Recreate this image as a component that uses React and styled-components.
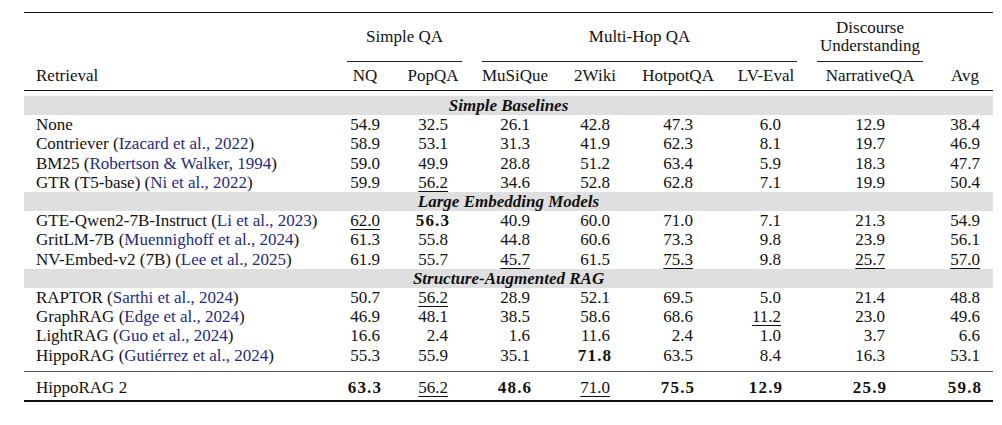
import React from 'react';
import styled, { createGlobalStyle } from 'styled-components';

const GlobalStyle = createGlobalStyle`
  html, body { margin: 0; padding: 0; background: #fff; }
  body, table, th, td { font-family: "Liberation Serif", "Times New Roman", serif; color: #111; }
`;

const Page = styled.div`
  padding: 12px 9px 20px 24px;
`;

const Table = styled.table`
  width: 969px;
  table-layout: fixed;
  border-collapse: collapse;
  border-top: 1.6px solid #111;
  border-bottom: 2px solid #111;
  font-family: "Liberation Serif", "Times New Roman", serif;
  font-size: 17px;
`;

const GroupCell = styled.th`
  padding: 0;
  font-weight: normal;
  font-size: 17px;
  vertical-align: bottom;
`;

const GroupLabel = styled.div`
  height: 48px;
  margin: 0 ${p => p.$mr || 0}px 0 ${p => p.$ml || 0}px;
  display: flex;
  align-items: center;
  justify-content: center;
  text-align: center;
  line-height: 18px;
  border-bottom: ${p => (p.$rule ? '1px solid #222' : 'none')};
`;

const HeadCell = styled.th`
  height: 28px;
  padding: 0;
  padding-left: ${p => (p.$left ? '12px' : '0')};
  font-weight: normal;
  font-size: 17px;
  text-align: ${p => (p.$left ? 'left' : 'center')};
  vertical-align: middle;
  border-bottom: 1px solid #111;
  white-space: nowrap;
`;

const Spacer = styled.td`
  height: ${p => p.$h}px;
  padding: 0;
`;

const BandCell = styled.td`
  height: 19.2px;
  padding: 0;
  line-height: 19.2px;
  font-size: 17px;
  background: #dfdfdf;
  text-align: center;
  font-weight: bold;
  font-style: italic;
`;

const Cell = styled.td`
  height: 19.2px;
  line-height: 19.2px;
  font-size: 17px;
  padding: ${p => (p.$final ? '6px 0 3px' : '0')};
  padding-left: ${p => (p.$left ? '12px' : '0')};
  text-align: ${p => (p.$left ? 'left' : 'center')};
  border-top: ${p => (p.$final ? '1px solid #555' : 'none')};
  white-space: nowrap;
`;

const Num = styled.span`
  display: inline-block;
  min-width: 30px;
  text-align: right;
  font-weight: ${p => (p.$bold ? 'bold' : 'normal')};
  letter-spacing: ${p => (p.$bold ? '1.2px' : '0')};
  text-decoration: ${p => (p.$under ? 'underline' : 'none')};
  text-decoration-thickness: 1px;
  text-underline-offset: 3px;
`;

const Cite = styled.span`
  color: #1e2a84;
`;

const widths = [307, 68, 68, 96, 64, 102, 74, 134, 56];
const columns = ['NQ', 'PopQA', 'MuSiQue', '2Wiki', 'HotpotQA', 'LV-Eval', 'NarrativeQA', 'Avg'];

const sections = [
  {
    title: 'Simple Baselines',
    rows: [
      ['None', null, '54.9 32.5 26.1 42.8 47.3 6.0 12.9 38.4'],
      ['Contriever', 'Izacard et al., 2022', '58.9 53.1 31.3 41.9 62.3 8.1 19.7 46.9'],
      ['BM25', 'Robertson & Walker, 1994', '59.0 49.9 28.8 51.2 63.4 5.9 18.3 47.7'],
      ['GTR (T5-base)', 'Ni et al., 2022', '59.9 _56.2 34.6 52.8 62.8 7.1 19.9 50.4'],
    ],
  },
  {
    title: 'Large Embedding Models',
    rows: [
      ['GTE-Qwen2-7B-Instruct', 'Li et al., 2023', '_62.0 *56.3 40.9 60.0 71.0 7.1 21.3 54.9'],
      ['GritLM-7B', 'Muennighoff et al., 2024', '61.3 55.8 44.8 60.6 73.3 9.8 23.9 56.1'],
      ['NV-Embed-v2 (7B)', 'Lee et al., 2025', '61.9 55.7 _45.7 61.5 _75.3 9.8 _25.7 _57.0'],
    ],
  },
  {
    title: 'Structure-Augmented RAG',
    rows: [
      ['RAPTOR', 'Sarthi et al., 2024', '50.7 _56.2 28.9 52.1 69.5 5.0 21.4 48.8'],
      ['GraphRAG', 'Edge et al., 2024', '46.9 48.1 38.5 58.6 68.6 _11.2 23.0 49.6'],
      ['LightRAG', 'Guo et al., 2024', '16.6 2.4 1.6 11.6 2.4 1.0 3.7 6.6'],
      ['HippoRAG', 'Gutiérrez et al., 2024', '55.3 55.9 35.1 *71.8 63.5 8.4 16.3 53.1'],
    ],
  },
];

const finalRow = ['HippoRAG 2', null, '*63.3 _56.2 *48.6 _71.0 *75.5 *12.9 *25.9 *59.8'];

const Value = ({ v }) => {
  const bold = v.startsWith('*');
  const under = v.startsWith('_');
  return <Num $bold={bold} $under={under}>{bold || under ? v.slice(1) : v}</Num>;
};

const DataRow = ({ row, final }) => {
  const [name, cite, values] = row;
  return (
    <tr>
      <Cell $left $final={final}>
        {name}
        {cite && (
          <>
            {' ('}
            <Cite>{cite}</Cite>)
          </>
        )}
      </Cell>
      {values.split(' ').map((v, i) => (
        <Cell key={i} $final={final}>
          <Value v={v} />
        </Cell>
      ))}
    </tr>
  );
};

export default function App() {
  return (
    <Page>
      <GlobalStyle />
      <Table>
        <colgroup>
          {widths.map((w, i) => <col key={i} style={{ width: w }} />)}
        </colgroup>
        <thead>
          <tr>
            <GroupCell />
            <GroupCell colSpan={2}><GroupLabel $rule $ml={16} $mr={5}>Simple QA</GroupLabel></GroupCell>
            <GroupCell colSpan={4}><GroupLabel $rule $ml={15} $mr={6}>Multi-Hop QA</GroupLabel></GroupCell>
            <GroupCell><GroupLabel $rule $ml={14} $mr={14}>Discourse<br />Understanding</GroupLabel></GroupCell>
            <GroupCell />
          </tr>
          <tr>
            <HeadCell $left>Retrieval</HeadCell>
            {columns.map(c => <HeadCell key={c}>{c}</HeadCell>)}
          </tr>
        </thead>
        <tbody>
          <tr><Spacer $h={5} colSpan={9} /></tr>
          {sections.map(s => (
            <React.Fragment key={s.title}>
              <tr><BandCell colSpan={9}>{s.title}</BandCell></tr>
              {s.rows.map(r => <DataRow key={r[0]} row={r} />)}
            </React.Fragment>
          ))}
          <tr><Spacer $h={6} colSpan={9} /></tr>
          <DataRow row={finalRow} final />
        </tbody>
      </Table>
    </Page>
  );
}
